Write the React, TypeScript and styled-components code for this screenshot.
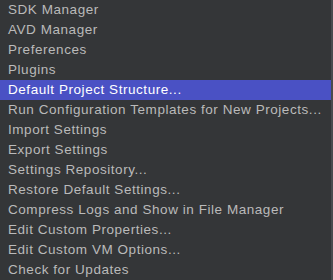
import React from 'react';
import styled, { createGlobalStyle } from 'styled-components';

const GlobalStyle = createGlobalStyle`
  html, body {
    margin: 0;
    padding: 0;
    background: #343638;
  }
`;

const Menu = styled.div`
  width: 331px;
  height: 280px;
  background: #343638;
  border-right: 2px solid #4a4c4e;
  display: flex;
  flex-direction: column;
  overflow: hidden;
  font-family: 'Liberation Sans', Arial, sans-serif;
  font-size: 13.5px;
`;

const Item = styled.div<{ active?: boolean }>`
  height: 20px;
  flex: 0 0 20px;
  display: flex;
  align-items: center;
  padding-left: 8px;
  padding-bottom: 1px;
  box-sizing: border-box;
  white-space: nowrap;
  letter-spacing: 0.55px;
  color: ${({ active }) => (active ? '#ffffff' : '#bababa')};
  background: ${({ active }) => (active ? '#4a51c4' : 'transparent')};
`;

const items = [
  'SDK Manager',
  'AVD Manager',
  'Preferences',
  'Plugins',
  'Default Project Structure...',
  'Run Configuration Templates for New Projects...',
  'Import Settings',
  'Export Settings',
  'Settings Repository...',
  'Restore Default Settings...',
  'Compress Logs and Show in File Manager',
  'Edit Custom Properties...',
  'Edit Custom VM Options...',
  'Check for Updates',
];

export default function App() {
  return (
    <>
      <GlobalStyle />
      <Menu>
        {items.map((label, i) => (
          <Item key={label} active={i === 4}>
            {label}
          </Item>
        ))}
      </Menu>
    </>
  );
}
